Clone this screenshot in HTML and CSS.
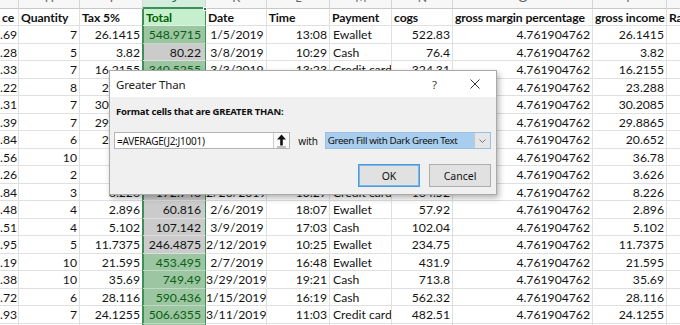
FILE: index.html
```html
<!DOCTYPE html>
<html lang="en">
<head>
<meta charset="utf-8">
<title>Greater Than</title>
<link rel="stylesheet" href="styles.css">
</head>
<body>
<div class="sheet">
  <div class="row letters">
    <div class="cell"></div><div class="cell">H</div><div class="cell">I</div><div class="cell jl">J</div><div class="cell">K</div><div class="cell">L</div><div class="cell">M</div><div class="cell">N</div><div class="cell">O</div><div class="cell">P</div><div class="cell"></div>
  </div>
  <div class="row head">
    <div class="cell r">ce</div><div class="cell">Quantity</div><div class="cell">Tax 5%</div><div class="cell j jh">Total</div><div class="cell">Date</div><div class="cell">Time</div><div class="cell">Payment</div><div class="cell">cogs</div><div class="cell">gross margin percentage</div><div class="cell">gross income</div><div class="cell">Ra</div>
  </div>
  <div class="row"><div class="cell r">.69</div><div class="cell r">7</div><div class="cell r">26.1415</div><div class="cell r j g">548.9715</div><div class="cell r">1/5/2019</div><div class="cell r">13:08</div><div class="cell">Ewallet</div><div class="cell r">522.83</div><div class="cell r">4.761904762</div><div class="cell r">26.1415</div><div class="cell"></div></div>
  <div class="row"><div class="cell r">.28</div><div class="cell r">5</div><div class="cell r">3.82</div><div class="cell r j s">80.22</div><div class="cell r">3/8/2019</div><div class="cell r">10:29</div><div class="cell">Cash</div><div class="cell r">76.4</div><div class="cell r">4.761904762</div><div class="cell r">3.82</div><div class="cell"></div></div>
  <div class="row"><div class="cell r">.33</div><div class="cell r">7</div><div class="cell r">16.2155</div><div class="cell r j g">340.5255</div><div class="cell r">3/3/2019</div><div class="cell r">13:23</div><div class="cell">Credit card</div><div class="cell r">324.31</div><div class="cell r">4.761904762</div><div class="cell r">16.2155</div><div class="cell"></div></div>
  <div class="row"><div class="cell r">.22</div><div class="cell r">8</div><div class="cell r">23.288</div><div class="cell r j g">489.048</div><div class="cell r">1/27/2019</div><div class="cell r">20:33</div><div class="cell">Ewallet</div><div class="cell r">465.76</div><div class="cell r">4.761904762</div><div class="cell r">23.288</div><div class="cell"></div></div>
  <div class="row"><div class="cell r">.31</div><div class="cell r">7</div><div class="cell r">30.2085</div><div class="cell r j g">634.3785</div><div class="cell r">2/8/2019</div><div class="cell r">10:37</div><div class="cell">Ewallet</div><div class="cell r">604.17</div><div class="cell r">4.761904762</div><div class="cell r">30.2085</div><div class="cell"></div></div>
  <div class="row"><div class="cell r">.39</div><div class="cell r">7</div><div class="cell r">29.8865</div><div class="cell r j g">627.6165</div><div class="cell r">3/25/2019</div><div class="cell r">18:30</div><div class="cell">Ewallet</div><div class="cell r">597.73</div><div class="cell r">4.761904762</div><div class="cell r">29.8865</div><div class="cell"></div></div>
  <div class="row"><div class="cell r">.84</div><div class="cell r">6</div><div class="cell r">20.652</div><div class="cell r j g">433.692</div><div class="cell r">2/25/2019</div><div class="cell r">14:36</div><div class="cell">Ewallet</div><div class="cell r">413.04</div><div class="cell r">4.761904762</div><div class="cell r">20.652</div><div class="cell"></div></div>
  <div class="row"><div class="cell r">.56</div><div class="cell r">10</div><div class="cell r">36.78</div><div class="cell r j g">772.38</div><div class="cell r">2/24/2019</div><div class="cell r">11:38</div><div class="cell">Ewallet</div><div class="cell r">735.6</div><div class="cell r">4.761904762</div><div class="cell r">36.78</div><div class="cell"></div></div>
  <div class="row"><div class="cell r">.26</div><div class="cell r">2</div><div class="cell r">3.626</div><div class="cell r j s">76.146</div><div class="cell r">1/10/2019</div><div class="cell r">17:15</div><div class="cell">Credit card</div><div class="cell r">72.52</div><div class="cell r">4.761904762</div><div class="cell r">3.626</div><div class="cell"></div></div>
  <div class="row"><div class="cell r">.84</div><div class="cell r">3</div><div class="cell r">8.226</div><div class="cell r j s">172.746</div><div class="cell r">2/20/2019</div><div class="cell r">13:27</div><div class="cell">Credit card</div><div class="cell r">164.52</div><div class="cell r">4.761904762</div><div class="cell r">8.226</div><div class="cell"></div></div>
  <div class="row"><div class="cell r">.48</div><div class="cell r">4</div><div class="cell r">2.896</div><div class="cell r j s">60.816</div><div class="cell r">2/6/2019</div><div class="cell r">18:07</div><div class="cell">Ewallet</div><div class="cell r">57.92</div><div class="cell r">4.761904762</div><div class="cell r">2.896</div><div class="cell"></div></div>
  <div class="row"><div class="cell r">.51</div><div class="cell r">4</div><div class="cell r">5.102</div><div class="cell r j s">107.142</div><div class="cell r">3/9/2019</div><div class="cell r">17:03</div><div class="cell">Cash</div><div class="cell r">102.04</div><div class="cell r">4.761904762</div><div class="cell r">5.102</div><div class="cell"></div></div>
  <div class="row"><div class="cell r">.95</div><div class="cell r">5</div><div class="cell r">11.7375</div><div class="cell r j s">246.4875</div><div class="cell r">2/12/2019</div><div class="cell r">10:25</div><div class="cell">Ewallet</div><div class="cell r">234.75</div><div class="cell r">4.761904762</div><div class="cell r">11.7375</div><div class="cell"></div></div>
  <div class="row"><div class="cell r">.19</div><div class="cell r">10</div><div class="cell r">21.595</div><div class="cell r j g">453.495</div><div class="cell r">2/7/2019</div><div class="cell r">16:48</div><div class="cell">Ewallet</div><div class="cell r">431.9</div><div class="cell r">4.761904762</div><div class="cell r">21.595</div><div class="cell"></div></div>
  <div class="row"><div class="cell r">.38</div><div class="cell r">10</div><div class="cell r">35.69</div><div class="cell r j g">749.49</div><div class="cell r">3/29/2019</div><div class="cell r">19:21</div><div class="cell">Cash</div><div class="cell r">713.8</div><div class="cell r">4.761904762</div><div class="cell r">35.69</div><div class="cell"></div></div>
  <div class="row"><div class="cell r">.72</div><div class="cell r">6</div><div class="cell r">28.116</div><div class="cell r j g">590.436</div><div class="cell r">1/15/2019</div><div class="cell r">16:19</div><div class="cell">Cash</div><div class="cell r">562.32</div><div class="cell r">4.761904762</div><div class="cell r">28.116</div><div class="cell"></div></div>
  <div class="row"><div class="cell r">.93</div><div class="cell r">7</div><div class="cell r">24.1255</div><div class="cell r j g">506.6355</div><div class="cell r">3/11/2019</div><div class="cell r">11:03</div><div class="cell">Credit card</div><div class="cell r">482.51</div><div class="cell r">4.761904762</div><div class="cell r">24.1255</div><div class="cell"></div></div>
  <div class="row"><div class="cell r">.61</div><div class="cell r">6</div><div class="cell r">21.783</div><div class="cell r j g">457.443</div><div class="cell r">1/1/2019</div><div class="cell r">10:39</div><div class="cell">Credit card</div><div class="cell r">435.66</div><div class="cell r">4.761904762</div><div class="cell r">21.783</div><div class="cell"></div></div>
</div>
<div class="handle"></div>

<div class="dialog">
  <div class="titlebar">
    <span class="title">Greater Than</span>
    <span class="help">?</span>
    <svg class="close" width="10" height="10" viewBox="0 0 10 10"><path d="M0.5 0.5 L9.5 9.5 M9.5 0.5 L0.5 9.5" stroke="#333" stroke-width="1" fill="none"/></svg>
  </div>
  <div class="dbody">
    <div class="label">Format cells that are GREATER THAN:</div>
    <div class="inputs">
      <div class="refbox">
        <span class="ref">=AVERAGE(J2:J1001)</span>
        <span class="collapse">
          <svg width="11" height="14" viewBox="0 0 11 14"><path d="M5.5 0.5 L10 5.5 H6.8 V11.5 H4.2 V5.5 H1 Z" fill="#111"/><rect x="1" y="12.5" width="9" height="1" fill="#8a8a8a"/></svg>
        </span>
      </div>
      <span class="with">with</span>
      <div class="combo">
        <span class="combo-text">Green Fill with Dark Green Text</span>
        <span class="combo-btn"><svg width="7" height="4" viewBox="0 0 7 4"><path d="M0.5 0.5 L3.5 3.5 L6.5 0.5" stroke="#777" fill="none"/></svg></span>
      </div>
    </div>
    <div class="buttons">
      <button class="btn ok">OK</button>
      <button class="btn">Cancel</button>
    </div>
  </div>
</div>
</body>
</html>
```

FILE: styles.css
```css
* { box-sizing: border-box; margin: 0; padding: 0; }
html, body { width: 680px; height: 325px; overflow: hidden; background: #fff; }
body {
  position: relative;
  font-family: Lato, "Open Sans", sans-serif;
  font-size: 12.2px;
  color: #141414;
}

/* ---------- sheet ---------- */
.sheet { display: flex; flex-direction: column; margin-top: -11.2px; width: 680px; overflow: hidden; }
.row {
  display: grid;
  grid-template-columns: 19px 61px 63px 63px 60.7px 63.3px 62px 61px 140px 74px 13px;
  height: 17.5px;
  flex: none;
}
.cell {
  border-right: 1px solid #e0e0e0;
  border-bottom: 1px solid #e0e0e0;
  padding: 0 2px 0 3px;
  white-space: nowrap;
  overflow: hidden;
  line-height: 17px;
}
.cell:last-child { border-right: 0; padding-left: 1px; }
.cell.r { text-align: right; padding-left: 0; }

.letters { height: 20px; }
.letters .cell {
  background: #f7f7f7;
  border-right-color: #d6d6d6;
  border-bottom-color: #c8c8c8;
  text-align: center;
  color: #666;
  line-height: 18.5px;
}
.letters .jl {
  background: #d3eedc;
  color: #217346;
  border-bottom: 2px solid #3f8f57;
}

.head .cell { font-weight: 700; color: #111; padding-left: 2px; letter-spacing: -0.1px; }
.head .cell.r { padding-right: 6px; }

.j {
  border-right-color: #3f8f57;
  box-shadow: inset 1px 0 #3f8f57, -1px 0 #3f8f57;
  border-bottom-color: rgba(255, 255, 255, 0.35);
  padding-right: 4px;
}
.head .j.jh { background: #c6efce; color: #006100; padding-left: 3px; }
.g { background: #9cc6a1; color: #0b5e14; }
.s { background: #cbcbcb; }

.handle {
  position: absolute;
  left: 203px;
  top: 7px;
  width: 4px;
  height: 4px;
  background: #217346;
  border: 1px solid #fff;
}

/* ---------- dialog ---------- */
.dialog {
  position: absolute;
  left: 109px;
  top: 70px;
  width: 388px;
  height: 125px;
  border: 1px solid #a9a9a9;
  background: #f0f0f0;
  box-shadow: 2px 3px 6px rgba(0, 0, 0, 0.3);
  font-family: "Noto Sans", "Open Sans", sans-serif;
  color: #111;
  display: flex;
  flex-direction: column;
}
.titlebar {
  height: 26px;
  background: #fff;
  display: flex;
  align-items: center;
  padding-left: 6px;
  flex: none;
}
.title { font-size: 11.5px; letter-spacing: -0.15px; flex: 1; color: #222; }
.help { font-size: 11.5px; color: #444; margin-right: 33px; }
.close { margin-right: 16px; }

.dbody { padding: 7px 5px 0 4px; display: flex; flex-direction: column; }
.label {
  font-size: 9.5px;
  font-weight: 700;
  letter-spacing: -0.2px;
  padding-left: 2px;
  line-height: 16px;
}
.inputs { display: flex; align-items: center; margin-top: 12px; height: 17px; }
.refbox {
  width: 177px;
  height: 17px;
  background: #fff;
  border: 1px solid #b4b4b4;
  display: flex;
  align-items: center;
}
.ref { flex: 1; font-size: 10px; letter-spacing: -0.25px; padding-left: 2px; }
.collapse {
  width: 16px;
  height: 15px;
  border-left: 1px solid #d0d0d0;
  display: flex;
  align-items: center;
  justify-content: center;
  background: #fafafa;
}
.with { font-size: 10px; letter-spacing: -0.2px; margin: 0 7px 0 8px; }
.combo {
  width: 167px;
  height: 17px;
  border: 1px solid #9bbfe0;
  background: #fff;
  display: flex;
}
.combo-text {
  flex: 1;
  background: #a9cdee;
  font-size: 9.8px;
  letter-spacing: -0.4px;
  line-height: 15px;
  padding-left: 2px;
}
.combo-btn {
  width: 16px;
  background: #e6e6e6;
  border-left: 1px solid #c8c8c8;
  display: flex;
  align-items: center;
  justify-content: center;
}
.buttons { display: flex; justify-content: flex-end; gap: 9px; margin-top: 15px; }
.btn {
  width: 62px;
  height: 23px;
  background: #e1e1e1;
  border: 1px solid #adadad;
  font-family: "Noto Sans", "Open Sans", sans-serif;
  font-size: 10.5px;
  color: #111;
}
.btn.ok { border: 1px solid #4c9be0; box-shadow: inset 0 0 0 1px #7db7ea; }
```
